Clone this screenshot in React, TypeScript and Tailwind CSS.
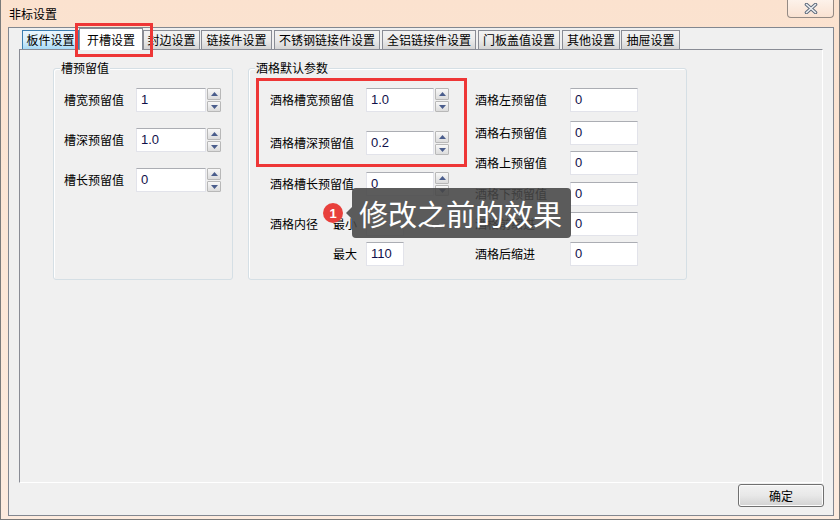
import React from 'react';

const cjk = "font-['Noto_Sans_CJK_SC',sans-serif]";

const tabs = [
  { t: '板件设置', c: 'w-[57px] ml-0', k: 'hover' },
  { t: '开槽设置', c: 'w-[64px] ml-0', k: 'sel' },
  { t: '封边设置', c: 'w-[57px] ml-0', k: '' },
  { t: '链接件设置', c: 'w-[71px] ml-[1px]', k: '' },
  { t: '不锈钢链接件设置', c: 'w-[106px] ml-[2px]', k: '' },
  { t: '全铝链接件设置', c: 'w-[94px] ml-[2px]', k: '' },
  { t: '门板盖值设置', c: 'w-[82px] ml-[2px]', k: '' },
  { t: '其他设置', c: 'w-[58px] ml-[2px]', k: '' },
  { t: '抽屉设置', c: 'w-[59px] ml-[1px]', k: '' },
];

const Arrow = ({ up }: { up?: boolean }) => (
  <svg width="7" height="4" viewBox="0 0 7 4">
    <path d={up ? 'M0 4L3.5 0L7 4Z' : 'M0 0L3.5 4L7 0Z'} fill="#4a5d8c" />
  </svg>
);

// little up/down buttons next to a number box
const Spin = () => (
  <div className="flex flex-col gap-[1px] ml-[1px]">
    <div className="w-[14px] h-[12px] flex items-center justify-center border border-[#b8b8b8] rounded-[1px] bg-linear-to-b from-[#f8f8f8] to-[#dcdcdc]">
      <Arrow up />
    </div>
    <div className="w-[14px] h-[11px] flex items-center justify-center border border-[#b8b8b8] rounded-[1px] bg-linear-to-b from-[#f8f8f8] to-[#dcdcdc]">
      <Arrow />
    </div>
  </div>
);

const Field = ({ value, w }: { value: string; w: string }) => (
  <div className={`${w} h-[24px] bg-white border border-[#e2e3ea] border-t-[#abadb3] pl-[4px] pt-[3px] text-[13px] leading-[16px] text-[#10104a] font-['Liberation_Sans',sans-serif]`}>
    {value}
  </div>
);

const Group = ({ title, className, children }: { title: string; className: string; children: React.ReactNode }) => (
  <div className={`relative border border-[#d5dfe5] rounded-[3px] shadow-[inset_1px_1px_0_#fff] ${className}`}>
    <span className="absolute -top-[9px] left-[6px] px-[1px] bg-[#f0f0f0] text-[12px] leading-[16px]">{title}</span>
    {children}
  </div>
);

export default function App() {
  return (
    <div className={`relative w-[840px] h-[520px] flex flex-col bg-linear-to-b from-[#fbe2cf] to-[#fdebde] border-l border-r border-b border-[#7a7a7a] text-black ${cjk}`}>
      {/* title bar */}
      <div className="h-[27px] flex items-start">
        <span className="pl-[8px] pt-[6px] text-[12px] leading-[16px]">非标设置</span>
        <div className="ml-auto mr-[5px] w-[47px] h-[18px] flex items-center justify-center border border-t-0 border-[#948a84] rounded-b-[4px] bg-linear-to-b from-[#fdf2ea] to-[#f9e2d2]">
          <svg width="14" height="11" viewBox="0 0 14 11">
            <path d="M2.5 1.5L11.5 9.5M11.5 1.5L2.5 9.5" stroke="#5e6b7c" strokeWidth="3.6" strokeLinecap="round" />
            <path d="M2.5 1.5L11.5 9.5M11.5 1.5L2.5 9.5" stroke="#eef0f3" strokeWidth="1.6" strokeLinecap="round" />
          </svg>
        </div>
      </div>

      {/* client area */}
      <div className="flex-1 ml-[7px] mr-[5px] mb-[3px] border border-[#828790] bg-[#f0f0f0] flex flex-col">
        {/* tabs */}
        <div className="h-[21px] flex items-end pl-[13px] text-[12px] leading-[16px]">
          {tabs.map((tab) => (
            <div
              key={tab.t}
              className={
                tab.k === 'sel'
                  ? `${tab.c} relative z-10 h-[22px] -mb-[1px] flex items-center justify-center bg-white border border-b-0 border-[#898c95]`
                  : tab.k === 'hover'
                  ? `${tab.c} h-[19px] flex items-center justify-center border border-b-0 border-[#3c7fb1] bg-linear-to-b from-[#eaf6fd] via-[#d9f0fc] to-[#a7d9f5]`
                  : `${tab.c} h-[19px] flex items-center justify-center border border-b-0 border-[#898c95] bg-linear-to-b from-[#f2f2f2] via-[#ebebeb] to-[#d4d4d4]`
              }
            >
              {tab.t}
            </div>
          ))}
        </div>

        {/* tab panel */}
        <div className="ml-[10px] w-[804px] h-[434px] border border-t-[#898c95] border-l-[#898c95] border-r-white border-b-white flex items-start pt-[18px] pl-[33px] gap-[15px] text-[12px] leading-[16px]">
          <Group title="槽预留值" className="w-[180px] h-[212px] pt-[19px] pl-[10px]">
            <div className="flex flex-col gap-[16px]">
              {[
                ['槽宽预留值', '1'],
                ['槽深预留值', '1.0'],
                ['槽长预留值', '0'],
              ].map(([l, v]) => (
                <div key={l} className="flex items-center h-[24px]">
                  <span className="w-[72px]">{l}</span>
                  <Field value={v} w="w-[70px]" />
                  <Spin />
                </div>
              ))}
            </div>
          </Group>

          <Group title="酒格默认参数" className="w-[439px] h-[212px] pt-[19px] pl-[21px] flex">
            <div className="w-[205px] flex flex-col">
              <div className="flex items-center h-[24px]">
                <span className="w-[96px]">酒格槽宽预留值</span>
                <Field value="1.0" w="w-[68px]" />
                <Spin />
              </div>
              <div className="flex items-center h-[24px] mt-[19px]">
                <span className="w-[96px]">酒格槽深预留值</span>
                <Field value="0.2" w="w-[68px]" />
                <Spin />
              </div>
              <div className="flex items-center h-[24px] mt-[17px]">
                <span className="w-[96px]">酒格槽长预留值</span>
                <Field value="0" w="w-[68px]" />
                <Spin />
              </div>
              <div className="flex items-center h-[24px] mt-[16px]">
                <span className="w-[63px]">酒格内径</span>
                <span className="w-[33px]">最小</span>
                <Field value="" w="w-[38px]" />
              </div>
              <div className="flex items-center h-[24px] mt-[6px]">
                <span className="w-[63px]" />
                <span className="w-[33px]">最大</span>
                <Field value="110" w="w-[38px]" />
              </div>
            </div>
            <div className="flex flex-col">
              <div className="flex items-center h-[24px]">
                <span className="w-[95px]">酒格左预留值</span>
                <Field value="0" w="w-[68px]" />
              </div>
              <div className="flex items-center h-[24px] mt-[9px]">
                <span className="w-[95px]">酒格右预留值</span>
                <Field value="0" w="w-[68px]" />
              </div>
              <div className="flex items-center h-[24px] mt-[6px]">
                <span className="w-[95px]">酒格上预留值</span>
                <Field value="0" w="w-[68px]" />
              </div>
              <div className="flex items-center h-[24px] mt-[7px]">
                <span className="w-[95px]">酒格下预留值</span>
                <Field value="0" w="w-[68px]" />
              </div>
              <div className="flex items-center h-[24px] mt-[6px]">
                <span className="w-[95px]">酒格前缩进</span>
                <Field value="0" w="w-[68px]" />
              </div>
              <div className="flex items-center h-[24px] mt-[6px]">
                <span className="w-[95px]">酒格后缩进</span>
                <Field value="0" w="w-[68px]" />
              </div>
            </div>
          </Group>
        </div>

        {/* footer */}
        <div className="flex justify-end pr-[9px] mt-[1px]">
          <button className="w-[86px] h-[23px] border border-[#707070] rounded-[3px] bg-linear-to-b from-[#f2f2f2] via-[#e8e8e8] to-[#d2d2d2] shadow-[inset_0_0_0_1px_#fcfcfc] text-[12px] leading-[16px]">
            确定
          </button>
        </div>
      </div>

      {/* annotations */}
      <div className="absolute left-[74px] top-[23px] w-[78px] h-[34px] border-[3px] border-[#ee3636]" />
      <div className="absolute left-[255px] top-[78px] w-[211px] h-[89px] border-[3px] border-[#ee3636]" />
      <div className="absolute left-[345px] top-[207px] w-0 h-0 border-y-[6px] border-y-transparent border-r-[6px] border-r-[rgba(70,70,70,0.88)]" />
      <div className="absolute left-[351px] top-[188px] w-[219px] h-[50px] rounded-[4px] bg-[rgba(70,70,70,0.88)] text-white text-[29px] leading-[50px] pl-[7px]">
        修改之前的效果
      </div>
      <div className="absolute left-[322px] top-[203px] w-[20px] h-[20px] rounded-full bg-[#e8403c] flex items-center justify-center text-white text-[13px] font-bold leading-none font-['Liberation_Sans',sans-serif]">
        1
      </div>
    </div>
  );
}
